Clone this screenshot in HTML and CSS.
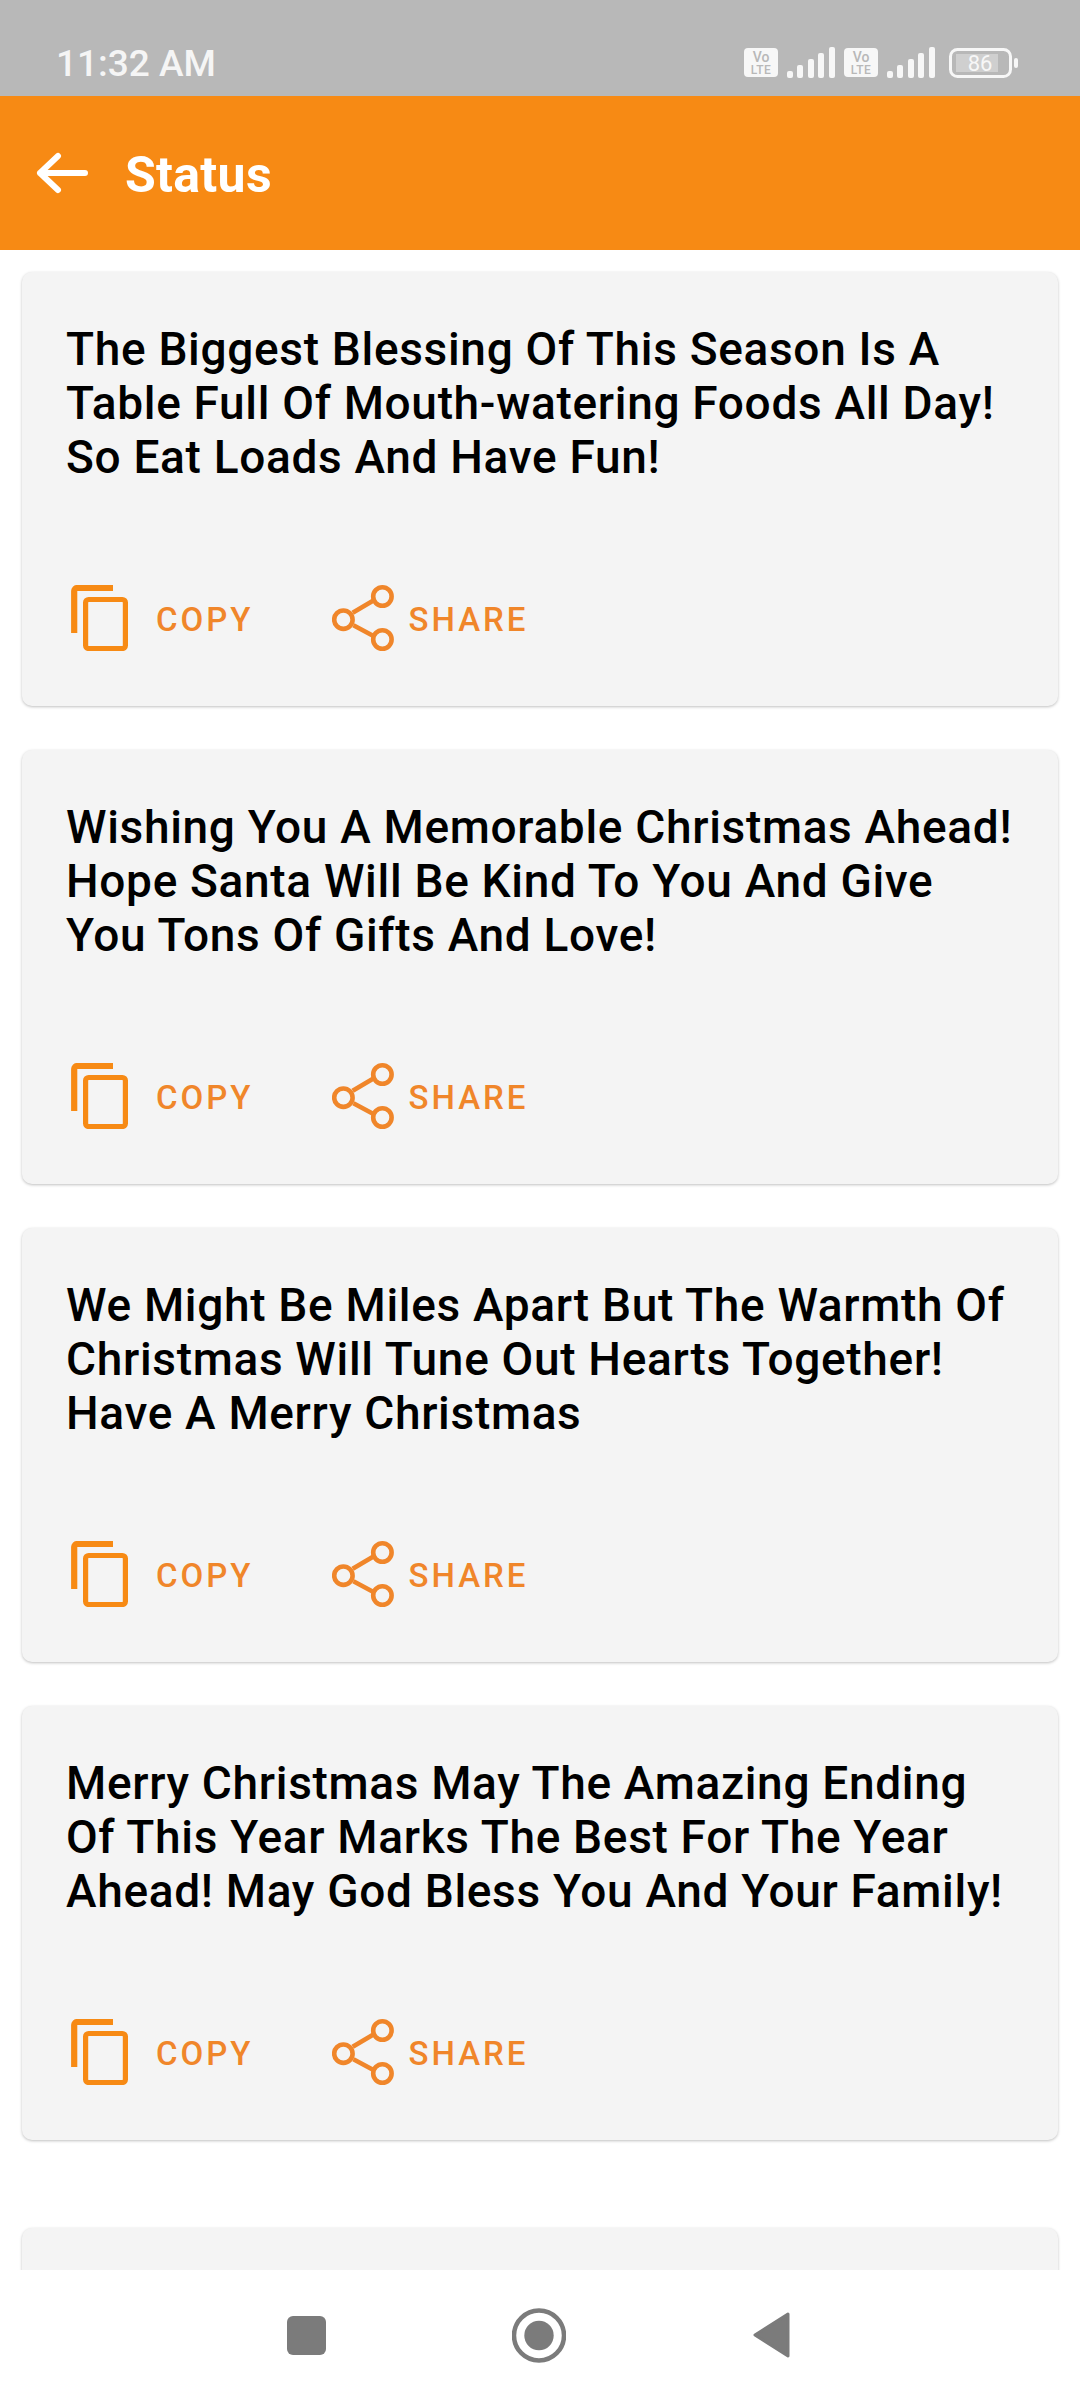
FILE: index.html
```html
<!DOCTYPE html>
<html>
<head>
    <title>Status</title>
    <link rel="stylesheet" href="styles.css">
</head>
<body>
    <div class="app">
        <div class="status-bar">
            <span class="status-time">11:32 AM</span>
            <div class="status-icons">
                <svg class="volte" width="34" height="29" viewBox="0 0 34 29">
                    <rect width="34" height="29" rx="4" fill="#f7f7f7"/>
                    <text x="17" y="14" class="volte-text volte-vo">Vo</text>
                    <text x="17" y="26" class="volte-text">LTE</text>
                </svg>
                <svg class="signal" width="48" height="31" viewBox="0 0 48 31">
                    <rect x="0" y="24" width="6" height="7" rx="2" fill="#f7f7f7"/>
                    <rect x="10" y="18" width="6" height="13" rx="2" fill="#f7f7f7"/>
                    <rect x="21" y="12" width="6" height="19" rx="2" fill="#f7f7f7"/>
                    <rect x="31" y="6" width="6" height="25" rx="2" fill="#f7f7f7"/>
                    <rect x="42" y="0" width="6" height="31" rx="2" fill="#f7f7f7"/>
                </svg>
                <svg class="volte" width="34" height="29" viewBox="0 0 34 29">
                    <rect width="34" height="29" rx="4" fill="#f7f7f7"/>
                    <text x="17" y="14" class="volte-text volte-vo">Vo</text>
                    <text x="17" y="26" class="volte-text">LTE</text>
                </svg>
                <svg class="signal" width="48" height="31" viewBox="0 0 48 31">
                    <rect x="0" y="24" width="6" height="7" rx="2" fill="#f7f7f7"/>
                    <rect x="10" y="18" width="6" height="13" rx="2" fill="#f7f7f7"/>
                    <rect x="21" y="12" width="6" height="19" rx="2" fill="#f7f7f7"/>
                    <rect x="31" y="6" width="6" height="25" rx="2" fill="#f7f7f7"/>
                    <rect x="42" y="0" width="6" height="31" rx="2" fill="#f7f7f7"/>
                </svg>
                <svg class="battery" width="69" height="30" viewBox="0 0 69 30">
                    <rect x="1.5" y="1.5" width="60" height="27" rx="7" fill="none" stroke="#f7f7f7" stroke-width="3"/>
                    <rect x="7" y="6" width="42" height="18" fill="#cfcfcf"/>
                    <text x="31" y="23" class="battery-text">86</text>
                    <rect x="65" y="10" width="4" height="10" rx="2" fill="#f7f7f7"/>
                </svg>
            </div>
        </div>

        <div class="toolbar">
            <svg class="back-icon" width="52" height="42" viewBox="0 0 52 42">
                <path d="M49 21H4M22 4L4 21l18 17" fill="none" stroke="#fff" stroke-width="6" stroke-linecap="round" stroke-linejoin="round"/>
            </svg>
            <span class="toolbar-title">Status</span>
        </div>

        <div class="status-list">
            <div class="status-card">
                <p class="status-text">The Biggest Blessing Of This Season Is A Table Full Of Mouth-watering Foods All Day! So Eat Loads And Have Fun!</p>
                <div class="card-actions">
                    <button class="action-copy">
                        <svg width="57" height="66" viewBox="0 0 57 66"><path d="M3.2 48V6a3 3 0 0 1 3-3H42" fill="none" stroke="#f78a14" stroke-width="6.2"/><rect x="14.6" y="14.5" width="39.8" height="49" rx="3" fill="none" stroke="#f78a14" stroke-width="5.2"/></svg>
                        <span>COPY</span>
                    </button>
                    <button class="action-share">
                        <svg width="62" height="66" viewBox="0 0 62 66"><g fill="none" stroke="#f0862a" stroke-width="4.6"><circle cx="50.4" cy="11.5" r="9.2"/><circle cx="50.4" cy="54.5" r="9.2"/><circle cx="11.4" cy="34.7" r="9.2"/><path d="M20.7 27.7L41 15.7M21.4 40.3L41 50.7"/></g></svg>
                        <span>SHARE</span>
                    </button>
                </div>
            </div>
            <div class="status-card">
                <p class="status-text">Wishing You A Memorable Christmas Ahead! Hope Santa Will Be Kind To You And Give You Tons Of Gifts And Love!</p>
                <div class="card-actions">
                    <button class="action-copy">
                        <svg width="57" height="66" viewBox="0 0 57 66"><path d="M3.2 48V6a3 3 0 0 1 3-3H42" fill="none" stroke="#f78a14" stroke-width="6.2"/><rect x="14.6" y="14.5" width="39.8" height="49" rx="3" fill="none" stroke="#f78a14" stroke-width="5.2"/></svg>
                        <span>COPY</span>
                    </button>
                    <button class="action-share">
                        <svg width="62" height="66" viewBox="0 0 62 66"><g fill="none" stroke="#f0862a" stroke-width="4.6"><circle cx="50.4" cy="11.5" r="9.2"/><circle cx="50.4" cy="54.5" r="9.2"/><circle cx="11.4" cy="34.7" r="9.2"/><path d="M20.7 27.7L41 15.7M21.4 40.3L41 50.7"/></g></svg>
                        <span>SHARE</span>
                    </button>
                </div>
            </div>
            <div class="status-card">
                <p class="status-text">We Might Be Miles Apart But The Warmth Of Christmas Will Tune Out Hearts Together! Have A Merry Christmas</p>
                <div class="card-actions">
                    <button class="action-copy">
                        <svg width="57" height="66" viewBox="0 0 57 66"><path d="M3.2 48V6a3 3 0 0 1 3-3H42" fill="none" stroke="#f78a14" stroke-width="6.2"/><rect x="14.6" y="14.5" width="39.8" height="49" rx="3" fill="none" stroke="#f78a14" stroke-width="5.2"/></svg>
                        <span>COPY</span>
                    </button>
                    <button class="action-share">
                        <svg width="62" height="66" viewBox="0 0 62 66"><g fill="none" stroke="#f0862a" stroke-width="4.6"><circle cx="50.4" cy="11.5" r="9.2"/><circle cx="50.4" cy="54.5" r="9.2"/><circle cx="11.4" cy="34.7" r="9.2"/><path d="M20.7 27.7L41 15.7M21.4 40.3L41 50.7"/></g></svg>
                        <span>SHARE</span>
                    </button>
                </div>
            </div>
            <div class="status-card">
                <p class="status-text">Merry Christmas May The Amazing Ending Of This Year Marks The Best For The Year Ahead! May God Bless You And Your Family!</p>
                <div class="card-actions">
                    <button class="action-copy">
                        <svg width="57" height="66" viewBox="0 0 57 66"><path d="M3.2 48V6a3 3 0 0 1 3-3H42" fill="none" stroke="#f78a14" stroke-width="6.2"/><rect x="14.6" y="14.5" width="39.8" height="49" rx="3" fill="none" stroke="#f78a14" stroke-width="5.2"/></svg>
                        <span>COPY</span>
                    </button>
                    <button class="action-share">
                        <svg width="62" height="66" viewBox="0 0 62 66"><g fill="none" stroke="#f0862a" stroke-width="4.6"><circle cx="50.4" cy="11.5" r="9.2"/><circle cx="50.4" cy="54.5" r="9.2"/><circle cx="11.4" cy="34.7" r="9.2"/><path d="M20.7 27.7L41 15.7M21.4 40.3L41 50.7"/></g></svg>
                        <span>SHARE</span>
                    </button>
                </div>
            </div>
            <div class="status-card status-card-next"></div>
        </div>

        <div class="bottom-nav">
            <div class="nav-square"></div>
            <svg class="nav-home" width="54" height="55" viewBox="0 0 54 55">
                <circle cx="27" cy="27.5" r="25" fill="none" stroke="#7b7b7b" stroke-width="4.5"/>
                <circle cx="27" cy="27.5" r="14.7" fill="#7b7b7b"/>
            </svg>
            <svg class="nav-back" width="37" height="46" viewBox="0 0 37 46">
                <path d="M35 2L2 23l33 21z" fill="#7b7b7b" stroke="#7b7b7b" stroke-width="3" stroke-linejoin="round"/>
            </svg>
        </div>
    </div>
</body>
</html>
```

FILE: styles.css
```css
body {
    font-family: Roboto, "Noto Sans", sans-serif;
    margin: 0;
    padding: 0;
    background-color: white;
}
.app {
    display: flex;
    flex-direction: column;
    height: 2400px;
    overflow: hidden;
}
.status-bar {
    height: 96px;
    flex-shrink: 0;
    background-color: #b8b8b8;
    display: flex;
    justify-content: space-between;
    align-items: flex-end;
    padding: 0 62px 15px 56px;
    box-sizing: border-box;
}
.status-time {
    font-size: 37px;
    font-weight: 500;
    line-height: 34px;
    color: #f5f5f5;
}
.status-icons {
    display: flex;
    align-items: center;
    margin-bottom: 3px;
}
.volte {
    margin-right: 9px;
}
.signal {
    margin-right: 9px;
}
.battery {
    margin-left: 5px;
}
.volte-text {
    font-size: 12px;
    font-weight: 500;
    letter-spacing: 0.5px;
    text-anchor: middle;
    fill: #b8b8b8;
}
.volte-vo {
    font-size: 14px;
    letter-spacing: 0;
}
.battery-text {
    font-size: 22px;
    text-anchor: middle;
    fill: #f7f7f7;
}
.toolbar {
    height: 154px;
    flex-shrink: 0;
    background-color: #f78a14;
    display: flex;
    align-items: center;
    padding-left: 36px;
}
.back-icon {
    margin-right: 37px;
}
.toolbar-title {
    font-size: 50px;
    font-weight: 700;
    letter-spacing: 0.3px;
    color: white;
    margin-top: 4px;
}
.status-list {
    flex: 1;
    min-height: 0;
    overflow: hidden;
    padding: 22px 22px 0;
}
.status-card {
    background-color: #f4f4f4;
    border-radius: 10px;
    box-shadow: 0 1px 3px rgba(0, 0, 0, 0.25);
    height: 434px;
    box-sizing: border-box;
    padding: 50px 44px 0;
    margin-bottom: 44px;
}
.status-card-next {
    margin-top: 88px;
}
.status-text {
    margin: 0 0 101px;
    height: 162px;
    font-size: 46px;
    font-weight: 500;
    letter-spacing: 0.68px;
    line-height: 54px;
    color: #000;
}
.card-actions {
    display: flex;
    align-items: center;
    padding-left: 5px;
}
.action-copy, .action-share {
    display: flex;
    align-items: center;
    padding: 0;
    border: none;
    background: none;
    font-family: inherit;
    font-size: 33px;
    font-weight: 500;
    letter-spacing: 3px;
    color: #f0862a;
}
.action-copy {
    margin-right: 78px;
}
.action-copy span {
    margin-left: 28px;
    margin-top: 3px;
}
.action-share span {
    margin-left: 15px;
    margin-top: 3px;
}
.bottom-nav {
    height: 130px;
    flex-shrink: 0;
    background-color: white;
    display: flex;
    align-items: center;
    padding-left: 287px;
}
.nav-square {
    width: 39px;
    height: 39px;
    background-color: #7b7b7b;
    border-radius: 6px;
    margin-right: 186px;
}
.nav-back {
    margin-left: 187px;
}
```
